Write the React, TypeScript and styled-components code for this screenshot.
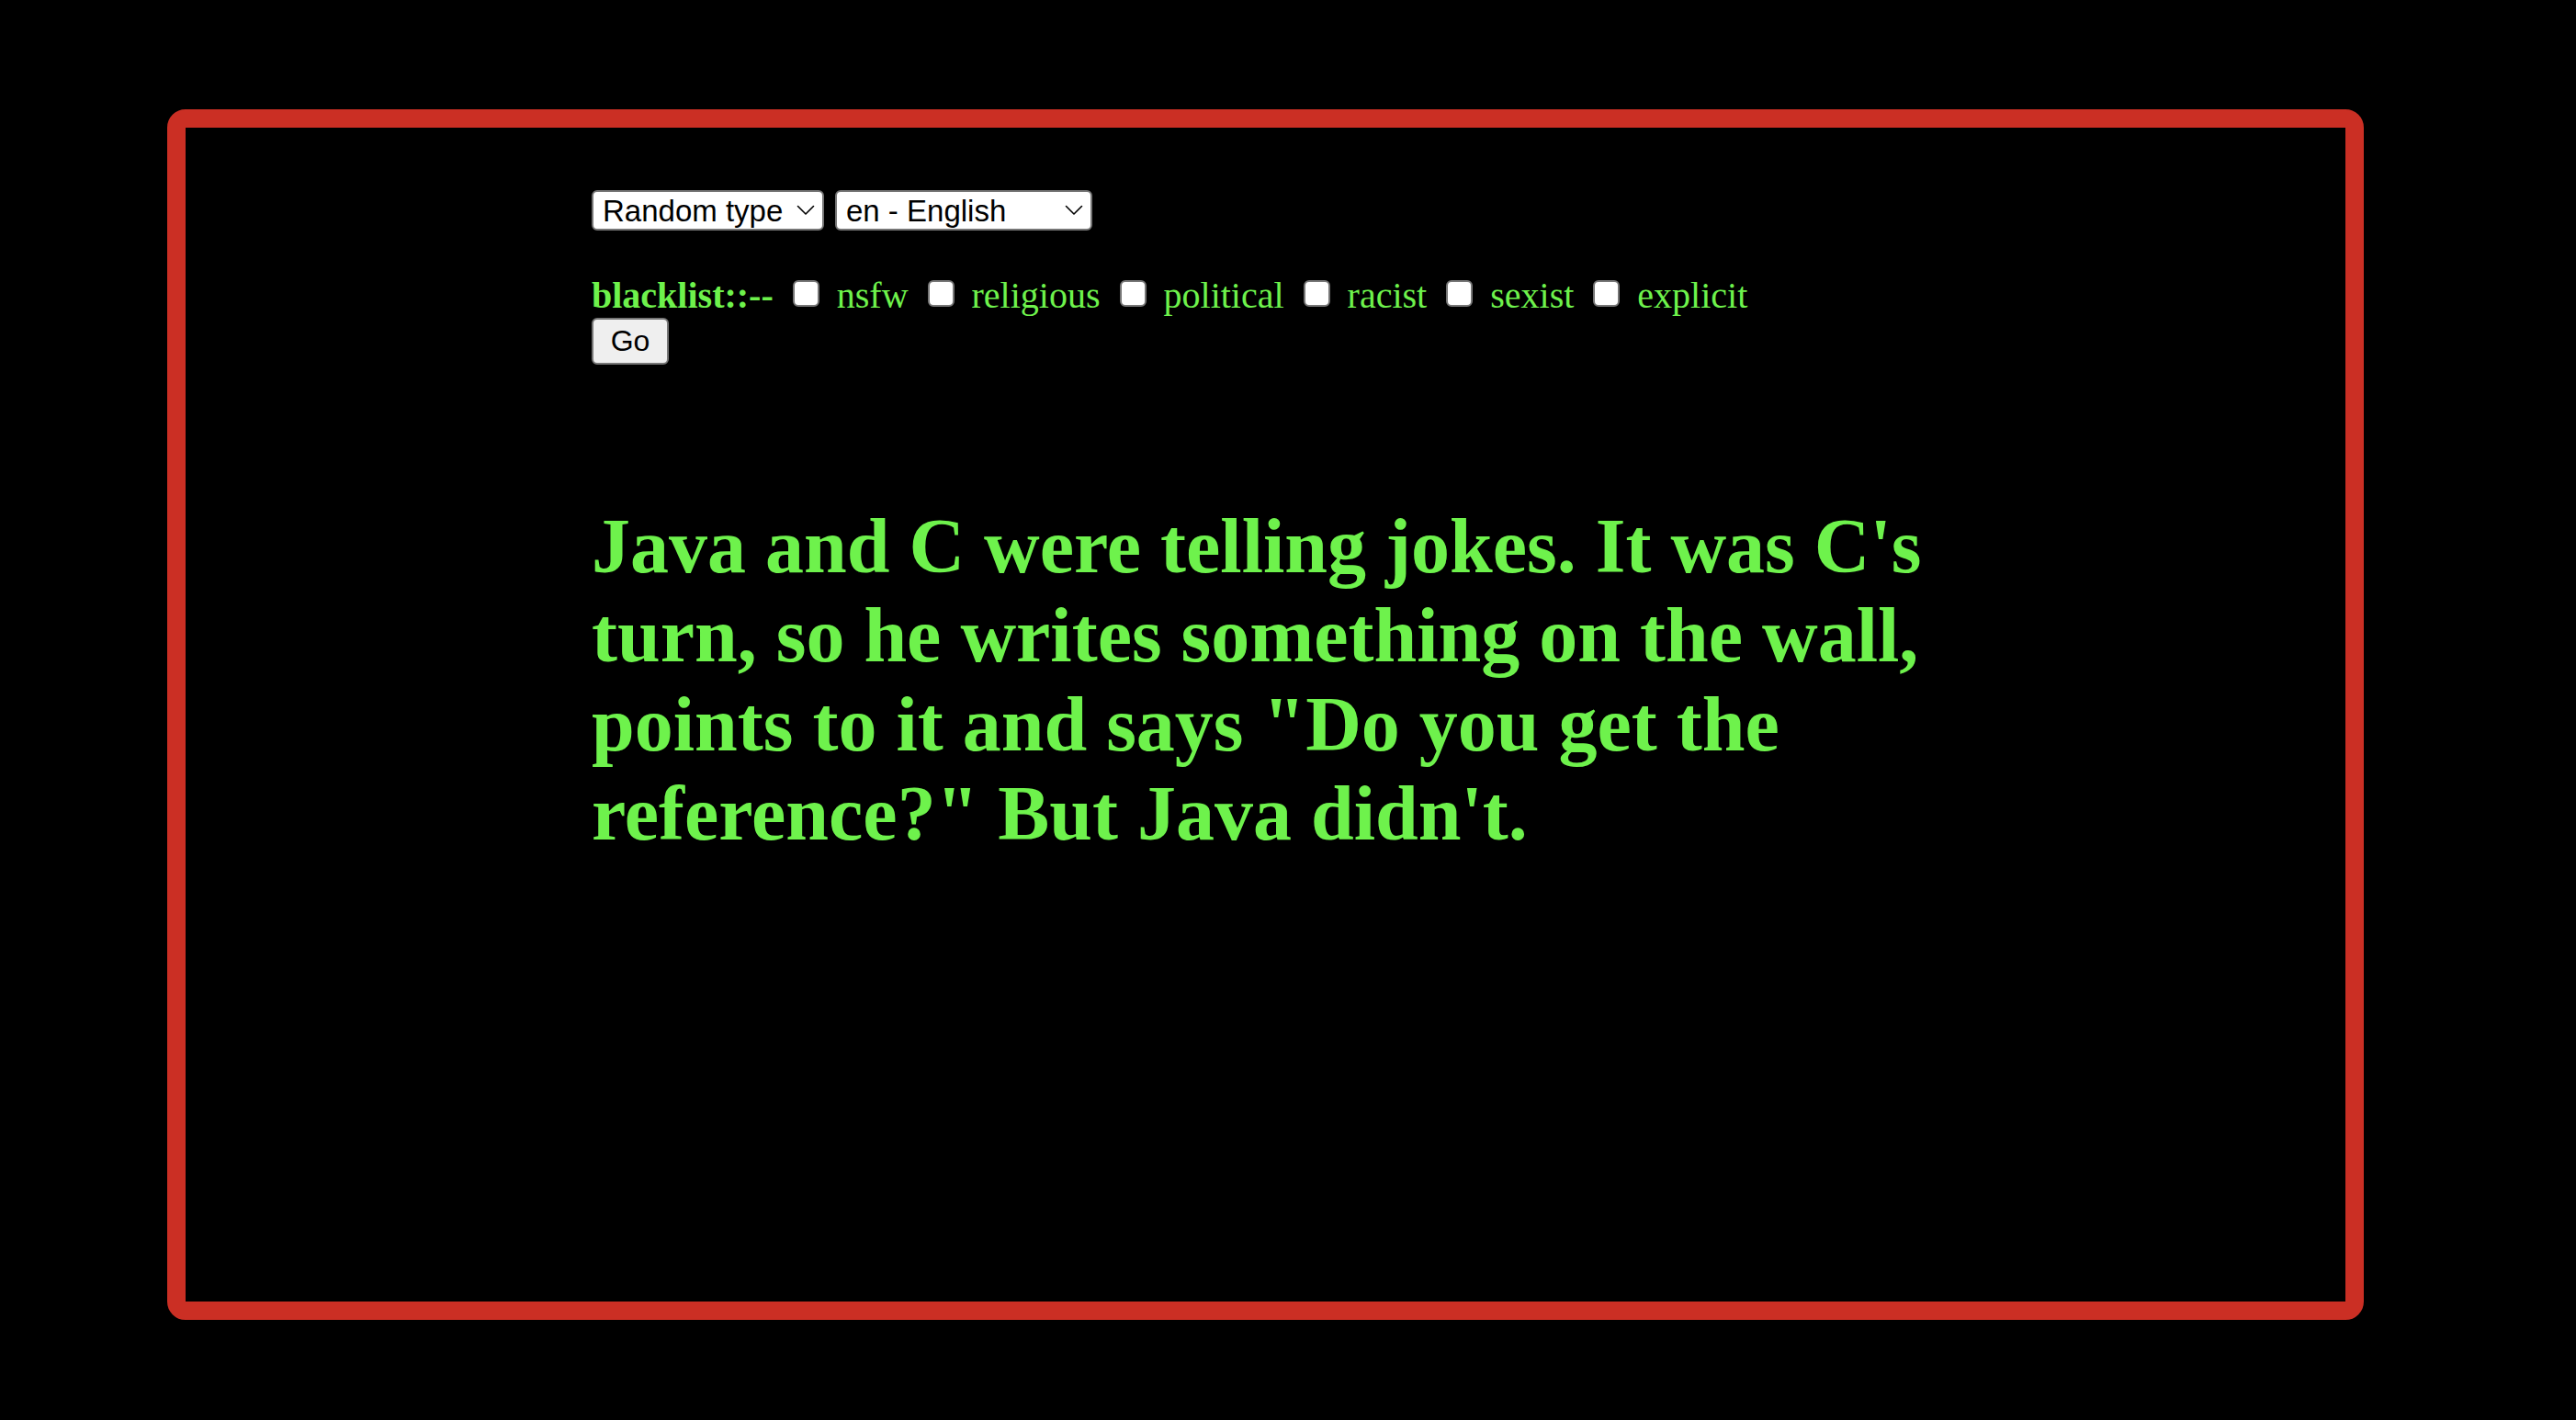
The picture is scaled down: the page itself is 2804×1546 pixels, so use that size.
import React from "react";
import styled, { createGlobalStyle } from "styled-components";

const GREEN = "#6ef24c";

const GlobalStyle = createGlobalStyle`
  html, body {
    margin: 0;
    padding: 0;
    background: #000;
  }
  body {
    font-family: "Liberation Serif", "Times New Roman", serif;
    min-height: 1546px;
  }
`;

const Page = styled.div`
  box-sizing: border-box;
  min-height: 1546px;
  padding: 119px 0 0 182px;
`;

const Frame = styled.main`
  box-sizing: border-box;
  width: 2391px;
  height: 1318px;
  border: 20px solid #cb2f24;
  border-radius: 20px;
  padding: 68px 0 0 442px;
`;

const Controls = styled.div`
  display: flex;
  gap: 12px;
`;

const SelectWrap = styled.div`
  position: relative;
  display: inline-block;
`;

const Select = styled.select<{ $w: number }>`
  appearance: none;
  -webkit-appearance: none;
  box-sizing: border-box;
  width: ${(p) => p.$w}px;
  height: 44px;
  margin: 0;
  padding: 0 0 0 10px;
  border: 2px solid #767676;
  border-radius: 6px;
  background: #fff;
  color: #000;
  font-family: "Liberation Sans", Arial, sans-serif;
  font-size: 33px;
`;

const Chevron = styled.svg`
  position: absolute;
  right: 10px;
  top: 50%;
  transform: translateY(-50%);
  width: 20px;
  height: 12px;
  pointer-events: none;
`;

const BlacklistRow = styled.div`
  display: flex;
  align-items: flex-start;
  margin-top: 48px;
  line-height: 46px;
  font-size: 40px;
  color: ${GREEN};
`;

const RowTitle = styled.strong`
  font-weight: bold;
`;

const Check = styled.input`
  appearance: none;
  -webkit-appearance: none;
  box-sizing: border-box;
  width: 29px;
  height: 29px;
  margin: 6px 0 0 21px;
  border: 2px solid #767676;
  border-radius: 6px;
  background: #fff;
`;

const CheckLabel = styled.label`
  margin-left: 19px;
`;

const GoButton = styled.button`
  display: block;
  box-sizing: border-box;
  width: 84px;
  height: 51px;
  margin-top: 1px;
  padding: 0;
  border: 2px solid #767676;
  border-radius: 6px;
  background: #efefef;
  color: #000;
  font-family: "Liberation Sans", Arial, sans-serif;
  font-size: 32px;
`;

const Joke = styled.h1`
  margin: 149px 0 0;
  max-width: 1520px;
  font-family: "Liberation Serif", "Times New Roman", serif;
  font-weight: bold;
  font-size: 84px;
  line-height: 97px;
  color: ${GREEN};
`;

const ChevronIcon = () => (
  <Chevron viewBox="0 0 20 12" fill="none">
    <polyline
      points="1.5,1.5 10,10 18.5,1.5"
      stroke="#000"
      strokeWidth="1.6"
      strokeLinecap="round"
      strokeLinejoin="round"
    />
  </Chevron>
);

const categories = ["nsfw", "religious", "political", "racist", "sexist", "explicit"];

export default function App() {
  return (
    <>
      <GlobalStyle />
      <Page>
        <Frame>
          <Controls>
            <SelectWrap>
              <Select $w={253} defaultValue="random">
                <option value="random">Random type</option>
                <option value="single">single</option>
                <option value="twopart">twopart</option>
              </Select>
              <ChevronIcon />
            </SelectWrap>
            <SelectWrap>
              <Select $w={280} defaultValue="en">
                <option value="en">en - English</option>
                <option value="de">de - German</option>
              </Select>
              <ChevronIcon />
            </SelectWrap>
          </Controls>
          <BlacklistRow>
            <RowTitle>blacklist::--</RowTitle>
            {categories.map((c) => (
              <React.Fragment key={c}>
                <Check type="checkbox" id={`bl-${c}`} />
                <CheckLabel htmlFor={`bl-${c}`}>{c}</CheckLabel>
              </React.Fragment>
            ))}
          </BlacklistRow>
          <GoButton type="button">Go</GoButton>
          <Joke>
            Java and C were telling jokes. It was C's turn, so he writes something on the
            wall, points to it and says "Do you get the reference?" But Java didn't.
          </Joke>
        </Frame>
      </Page>
    </>
  );
}
